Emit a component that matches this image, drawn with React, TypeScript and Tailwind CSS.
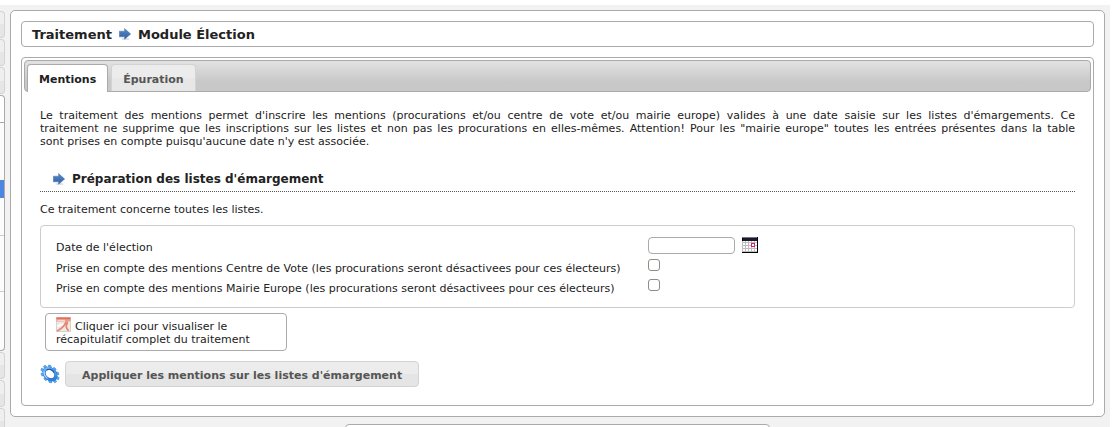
import React from "react";

function ArrowIcon() {
  return (
    <svg width="12" height="12" viewBox="0 0 12 12" className="shrink-0" aria-hidden="true">
      <defs>
        <linearGradient id="arrow" x1="0" y1="0" x2="0" y2="1">
          <stop offset="0" stopColor="#5a8ac6" />
          <stop offset="1" stopColor="#2f5fa3" />
        </linearGradient>
      </defs>
      <ellipse cx="6.5" cy="11" rx="4" ry="0.9" fill="#ddd" />
      <path d="M0.3 3.2H5.6V0.6L11.7 6L5.6 11.2V8.8H0.3Z" fill="url(#arrow)" stroke="#4674b3" strokeWidth="0.5" />
    </svg>
  );
}

function PdfIcon() {
  return (
    <svg width="15" height="15" viewBox="0 0 15 15" className="-my-1 mr-1 inline-block align-[2px]" aria-hidden="true">
      <rect x="0.5" y="0.5" width="14" height="14" fill="#edeae6" stroke="#d8d2cc" />
      <path d="M0.5 0.5H14.5V4.5H0.5Z" fill="#ef9a88" />
      <path d="M0.5 0.5H14.5V2.2H0.5Z" fill="#e0705c" />
      <path d="M1.5 3.4H9" stroke="#fbd9d1" strokeWidth="1.2" />
      <path d="M1 9.2C3.5 8 6 7.6 8.6 7.4" fill="none" stroke="#fff" strokeWidth="1.8" />
      <path d="M1 14C4.5 12.6 7.8 9.6 9.4 6.2C10.4 4.2 12 5.2 11 6.8C9.8 8.6 10.4 11.6 12.6 13.8" fill="none" stroke="#e98673" strokeWidth="1.8" />
    </svg>
  );
}

const TEETH = [0, 36, 72, 108, 144, 180, 216, 252, 288, 324];

function GearIcon() {
  return (
    <svg width="20" height="20" viewBox="0 0 20 20" className="shrink-0" aria-hidden="true">
      <defs>
        <linearGradient id="gear" x1="0" y1="0" x2="1" y2="0.6">
          <stop offset="0" stopColor="#7cc0fa" />
          <stop offset="0.5" stopColor="#4a9ff2" />
          <stop offset="1" stopColor="#2a7fdc" />
        </linearGradient>
      </defs>
      <g transform="rotate(42 10 10) translate(-0.5 2) scale(1.05 0.8)">
        {TEETH.map((angle) => (
          <path
            key={angle}
            d="M8.2 3.6L8.7 0.3H11.3L11.8 3.6Z"
            fill="#5aaaf4"
            stroke="#2b78cc"
            strokeWidth="0.5"
            transform={`rotate(${angle} 10 10)`}
          />
        ))}
        <circle cx="10" cy="10" r="6.2" fill="none" stroke="#2268b8" strokeWidth="3.2" />
        <circle cx="10" cy="10.2" r="6.4" fill="none" stroke="url(#gear)" strokeWidth="2.6" />
        <path d="M4.4 12.6A6.2 6.2 0 0 0 11 16.2" fill="none" stroke="#b9e0ff" strokeWidth="1.2" />
      </g>
      <path d="M6.6 6.2C8.6 4.4 12.4 5.2 14.2 8.6" fill="none" stroke="#1d55a0" strokeWidth="1.2" />
    </svg>
  );
}

function CalendarIcon() {
  return (
    <svg width="16" height="16" viewBox="0 0 16 16" shapeRendering="crispEdges" aria-hidden="true">
      <rect width="16" height="16" fill="#000" />
      <rect x="1" y="1" width="14" height="3" fill="#1b1b2b" />
      <rect y="0" width="15" height="1" fill="#77727c" />
      <rect x="1" y="4" width="14" height="11" fill="#fff" />
      <path d="M0 5.5H15M0 8.5H15M0 11.5H15M0 14.5H15M0.5 4V15M3.5 4V15M6.5 4V15M9.5 4V15M12.5 4V15" stroke="#bdbdbd" fill="none" />
      <rect x="9.5" y="6.5" width="3" height="3" fill="#fff" stroke="#f0136f" />
    </svg>
  );
}

function MenuStub() {
  return (
    <div className="h-[27px] rounded-r border border-l-0 border-[#d3d3d3] bg-linear-to-b from-[#efefef] from-50% to-[#e6e6e6] to-50%" />
  );
}

function SideMenu() {
  return (
    <nav aria-label="Menu" className="flex w-[5px] shrink-0 flex-col pt-1.5">
      <div className="flex flex-col gap-px">
        <MenuStub />
        <MenuStub />
        <MenuStub />
        <div className="h-[28px] rounded-tr border border-l-0 border-[#aaaaaa] bg-white" />
      </div>
      <div className="mb-px h-[228px] shrink-0 rounded-br border-r border-b border-[#aaaaaa] bg-[#fcfcfc]">
        <div className="h-[57px]" />
        <div className="h-[18px] bg-[#4c86e0]" />
        <div className="h-[38px] border-b border-[#cccccc]" />
        <div className="h-[56px] border-b border-[#cccccc]" />
      </div>
      <div className="flex shrink-0 flex-col gap-px">
        <MenuStub />
        <MenuStub />
        <MenuStub />
      </div>
    </nav>
  );
}

const checkboxClass =
  "block size-3 appearance-none self-start rounded-[3px] border border-[#8f8b85] bg-white checked:bg-[#4c86e0]";

function ElectionForm() {
  return (
    <form onSubmit={(e) => e.preventDefault()}>
      <div className="rounded border border-[#cccccc] px-[15px] pt-[10px] pb-2">
        <div className="grid grid-cols-[592px_1fr]">
          <label htmlFor="date" className="leading-[23px]">
            Date de l'élection
          </label>
          <div className="flex items-start gap-[7px] pt-px">
            <input
              id="date"
              type="text"
              className="h-[17px] w-[87px] rounded border border-[#aaaaaa] bg-white px-1 text-[11px] outline-none"
            />
            <button type="button" aria-label="Choisir une date">
              <CalendarIcon />
            </button>
          </div>
          <label htmlFor="centre" className="leading-5">
            Prise en compte des mentions Centre de Vote (les procurations seront désactivees pour ces électeurs)
          </label>
          <input id="centre" type="checkbox" className={checkboxClass} />
          <label htmlFor="europe" className="leading-5">
            Prise en compte des mentions Mairie Europe (les procurations seront désactivees pour ces électeurs)
          </label>
          <input id="europe" type="checkbox" className={checkboxClass} />
        </div>
      </div>
      <a
        href="#recapitulatif"
        className="mt-[5px] ml-[5px] block w-[242px] rounded border border-[#aaaaaa] px-[10px] pt-1.5 pb-1 leading-[13px]"
      >
        <PdfIcon />
        Cliquer ici pour visualiser le récapitulatif complet du traitement
      </a>
      <div className="mt-[10px] flex items-center gap-[5px]">
        <GearIcon />
        <button
          type="submit"
          className="h-[26px] rounded border border-[#d3d3d3] bg-linear-to-b from-[#ececec] from-50% to-[#e5e5e5] to-50% px-4 pt-0.5 font-bold text-[#555555]"
        >
          Appliquer les mentions sur les listes d'émargement
        </button>
      </div>
    </form>
  );
}

export default function App() {
  return (
    <div className="h-screen overflow-hidden bg-white pt-[5px] pr-[5px] font-['DejaVu_Sans',sans-serif] text-[11px] leading-[13px] text-[#222222]">
      <div className="flex h-full bg-[#f2f2f2]">
        <SideMenu />
        <div className="min-w-0 flex-1 px-[5px] pt-[5px]">
          <main className="rounded-[5px] border border-[#aaaaaa] bg-white p-[10px]">
            <h1 className="flex h-[26px] items-center gap-[7px] rounded border border-[#aaaaaa] px-[10px] text-[13px] font-bold">
              Traitement
              <ArrowIcon />
              Module Élection
            </h1>
            <section className="mt-[10px] rounded border border-[#aaaaaa] p-0.5">
              <div
                role="tablist"
                className="flex h-8 items-end gap-[3px] rounded border border-[#aaaaaa] bg-linear-to-b from-[#e2e2e2] to-[#c8c8c8] to-70% pl-0.5"
              >
                <button
                  type="button"
                  role="tab"
                  aria-selected="true"
                  className="-mb-px h-7 rounded-t border border-b-0 border-[#aaaaaa] bg-white px-[11px] pt-0.5 font-bold text-[#212121]"
                >
                  Mentions
                </button>
                <button
                  type="button"
                  role="tab"
                  aria-selected="false"
                  className="h-[27px] rounded-t border border-b-0 border-[#d3d3d3] bg-linear-to-b from-[#ececec] from-50% to-[#e7e7e7] to-50% px-[11px] pt-0.5 font-bold text-[#555555]"
                >
                  Épuration
                </button>
              </div>
              <div role="tabpanel" className="px-4 pt-[17px] pb-4">
                <p className="text-justify">
                  <span className="block [text-align-last:justify]">
                    Le traitement des mentions permet d'inscrire les mentions (procurations et/ou centre de vote et/ou
                    mairie europe) valides à une date saisie sur les listes d'émargements. Ce
                  </span>{" "}
                  <span className="block [text-align-last:justify]">
                    traitement ne supprime que les inscriptions sur les listes et non pas les procurations en
                    elles-mêmes. Attention! Pour les "mairie europe" toutes les entrées présentes dans la table
                  </span>{" "}
                  sont prises en compte puisqu'aucune date n'y est associée.
                </p>
                <h2 className="mt-[23px] flex items-center gap-[7px] border-b border-dotted border-[#555555] pb-1 pl-[13px] text-[12px] leading-4 font-bold">
                  <ArrowIcon />
                  Préparation des listes d'émargement
                </h2>
                <p className="mt-[11px] mb-[9px]">Ce traitement concerne toutes les listes.</p>
                <ElectionForm />
              </div>
            </section>
          </main>
          <footer className="mx-auto mt-[7px] h-8 w-[425px] rounded border border-[#aaaaaa] bg-white" />
        </div>
      </div>
    </div>
  );
}
